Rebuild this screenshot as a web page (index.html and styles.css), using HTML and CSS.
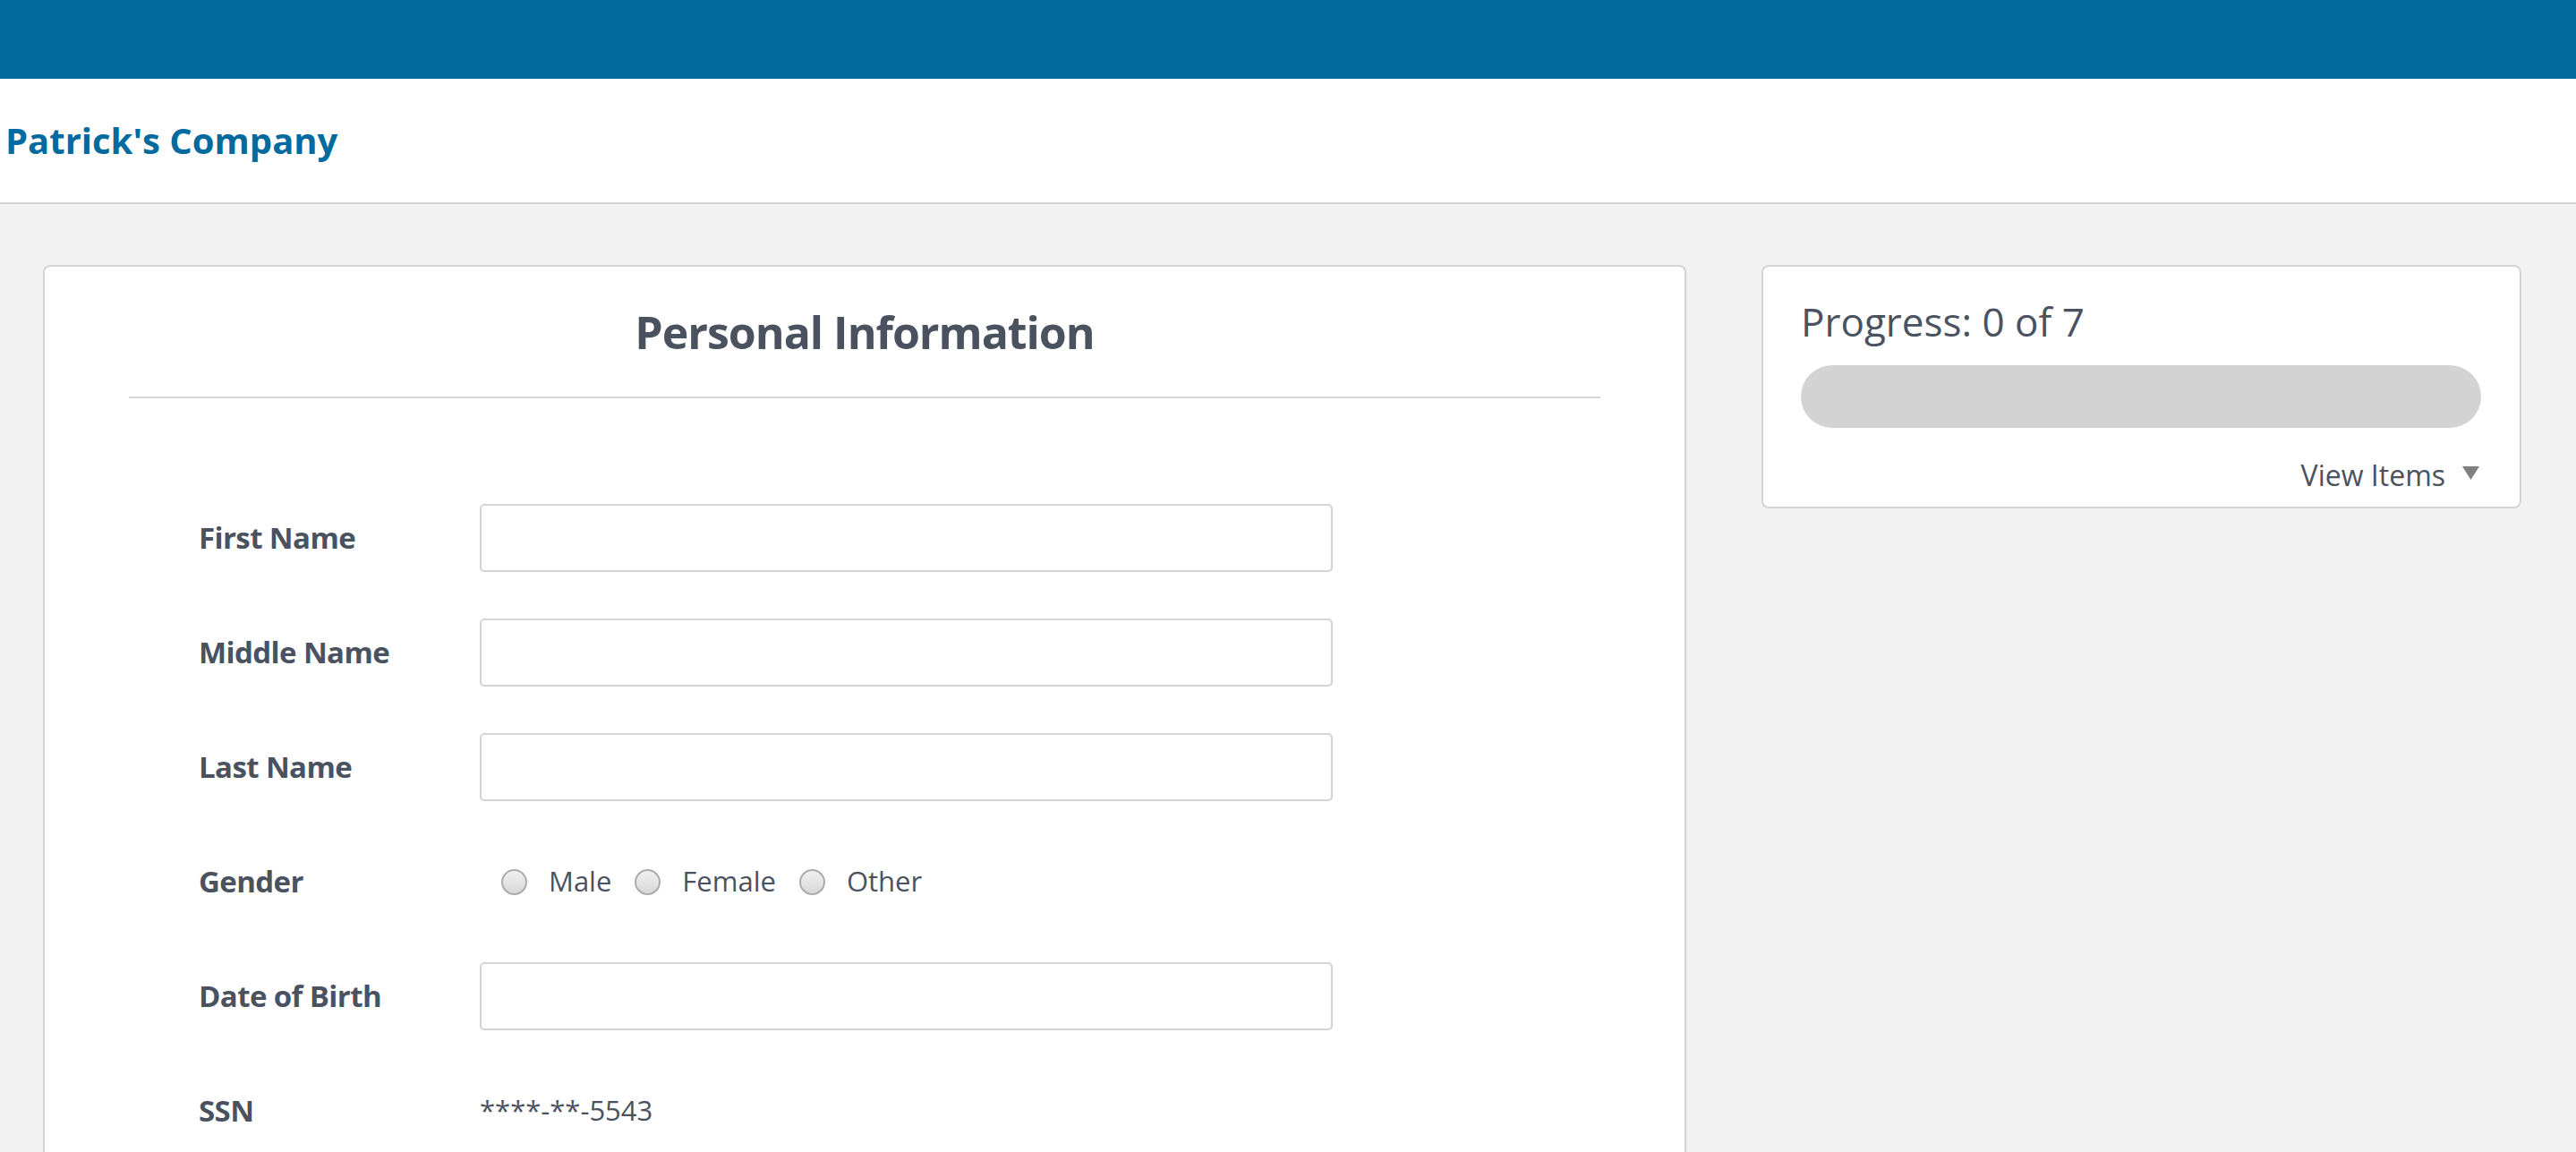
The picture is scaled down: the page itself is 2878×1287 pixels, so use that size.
FILE: index.html
```html
<!DOCTYPE html>
<html lang="en">
<head>
<meta charset="utf-8">
<title>Personal Information</title>
<link rel="stylesheet" href="styles.css">
</head>
<body>
<div class="topbar"></div>
<header class="header">
  <a class="brand" href="#">Patrick's Company</a>
</header>
<main class="main">
  <section class="card form-card">
    <h2 class="card-title">Personal Information</h2>
    <hr class="divider">
    <form class="form">
      <div class="row">
        <label class="label" for="first">First Name</label>
        <input class="field" id="first" type="text">
      </div>
      <div class="row">
        <label class="label" for="middle">Middle Name</label>
        <input class="field" id="middle" type="text">
      </div>
      <div class="row">
        <label class="label" for="last">Last Name</label>
        <input class="field" id="last" type="text">
      </div>
      <div class="row">
        <span class="label">Gender</span>
        <div class="radios">
          <label class="radio"><input type="radio" name="gender"><span>Male</span></label>
          <label class="radio"><input type="radio" name="gender"><span>Female</span></label>
          <label class="radio"><input type="radio" name="gender"><span>Other</span></label>
        </div>
      </div>
      <div class="row">
        <label class="label" for="dob">Date of Birth</label>
        <input class="field" id="dob" type="text">
      </div>
      <div class="row">
        <span class="label">SSN</span>
        <span class="static">****-**-5543</span>
      </div>
    </form>
  </section>
  <aside class="card progress-card">
    <div class="progress-title">Progress: 0 of 7</div>
    <div class="progress-bar"></div>
    <div class="view-items">
      <span>View Items</span>
      <svg class="caret" width="19" height="15" viewBox="0 0 19 15"><polygon points="0,0 19,0 9.5,15" fill="#808080"/></svg>
    </div>
  </aside>
</main>
</body>
</html>
```
FILE: styles.css
```css
* { box-sizing: border-box; }
html, body { margin: 0; padding: 0; }
body {
  background: #f2f2f2;
  font-family: "Open Sans", "Noto Sans", "Liberation Sans", sans-serif;
  color: #4a5260;
  overflow: hidden;
}
.topbar { height: 88px; background: #016a9e; }
.header {
  height: 140px;
  background: #fff;
  border-bottom: 2px solid #d4d4d4;
  display: flex;
  align-items: center;
  padding-left: 6px;
}
.brand {
  font-size: 40px;
  line-height: 1.2;
  font-weight: 700;
  color: #016a9e;
  text-decoration: none;
}
.main {
  display: flex;
  align-items: flex-start;
  gap: 84px;
  padding: 68px 0 0 48px;
}
.card {
  background: #fff;
  border: 2px solid #d4d4d4;
  border-radius: 8px;
}
.form-card { width: 1836px; flex: none; padding: 43px 0 70px; }
.card-title {
  margin: 0;
  text-align: center;
  font-size: 50px;
  line-height: 60px;
  font-weight: 700;
  letter-spacing: -1px;
}
.divider {
  margin: 42px 94px 0;
  border: 0;
  height: 2px;
  background: #d4d4d4;
}
.form {
  padding: 118px 0 0 172px;
  display: flex;
  flex-direction: column;
  gap: 52px;
}
.row { display: flex; align-items: center; height: 76px; }
.label {
  width: 314px;
  flex: none;
  font-size: 33px;
  font-weight: 700;
  line-height: 1.2;
  letter-spacing: -0.6px;
}
.field {
  width: 953px;
  height: 76px;
  border: 2px solid #d4d4d4;
  border-radius: 5px;
  background: #fff;
  font: inherit;
  font-size: 31px;
  padding: 0 16px;
  outline: none;
}
.radios { display: flex; align-items: center; margin-left: 24px; }
.radio {
  display: flex;
  align-items: center;
  gap: 24px;
  margin-right: 26px;
  font-size: 31px;
  line-height: 1.2;
}
.radio input {
  appearance: none;
  -webkit-appearance: none;
  margin: 0;
  width: 29px;
  height: 29px;
  border-radius: 50%;
  border: 2px solid #acacac;
  background: linear-gradient(#f0f0f0, #d8d8d8);
}
.static { font-size: 31px; line-height: 1.2; }
.progress-card { width: 849px; flex: none; padding: 35px 43px 16px 42px; }
.progress-title { font-size: 44px; line-height: 1.2; font-weight: 400; }
.progress-bar {
  margin-top: 22px;
  height: 70px;
  border-radius: 35px;
  background: #d3d3d3;
}
.view-items {
  margin-top: 34px;
  display: flex;
  justify-content: flex-end;
  align-items: flex-start;
  gap: 19px;
  font-size: 32px;
  line-height: 1.2;
  padding-right: 2px;
}
.caret { margin-top: 9px; display: block; }
```
